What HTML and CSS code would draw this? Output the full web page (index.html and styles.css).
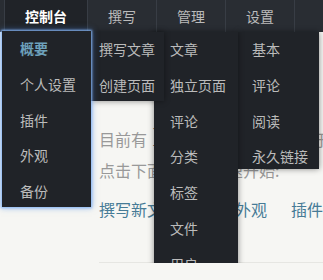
FILE: index.html
```html
<!DOCTYPE html>
<html lang="zh-CN">
<head>
<meta charset="utf-8">
<title>控制台</title>
<link rel="stylesheet" href="styles.css">
</head>
<body>
<header class="nav">
  <ul class="nav-list">
    <li class="nav-item">
      <a class="nav-link is-focus" href="#">控制台</a>
      <ul class="menu menu-dash">
        <li><a class="menu-link is-current" href="#">概要</a></li>
        <li><a class="menu-link" href="#">个人设置</a></li>
        <li><a class="menu-link" href="#">插件</a></li>
        <li><a class="menu-link" href="#">外观</a></li>
        <li><a class="menu-link" href="#">备份</a></li>
      </ul>
    </li>
    <li class="nav-item">
      <a class="nav-link" href="#">撰写</a>
      <ul class="menu menu-write">
        <li><a class="menu-link" href="#">撰写文章</a></li>
        <li><a class="menu-link" href="#">创建页面</a></li>
      </ul>
    </li>
    <li class="nav-item">
      <a class="nav-link" href="#">管理</a>
      <ul class="menu menu-manage">
        <li><a class="menu-link" href="#">文章</a></li>
        <li><a class="menu-link" href="#">独立页面</a></li>
        <li><a class="menu-link" href="#">评论</a></li>
        <li><a class="menu-link" href="#">分类</a></li>
        <li><a class="menu-link" href="#">标签</a></li>
        <li><a class="menu-link" href="#">文件</a></li>
        <li><a class="menu-link" href="#">用户</a></li>
      </ul>
    </li>
    <li class="nav-item">
      <a class="nav-link" href="#">设置</a>
      <ul class="menu menu-setting">
        <li><a class="menu-link" href="#">基本</a></li>
        <li><a class="menu-link" href="#">评论</a></li>
        <li><a class="menu-link" href="#">阅读</a></li>
        <li><a class="menu-link" href="#">永久链接</a></li>
      </ul>
    </li>
  </ul>
</header>
<main class="main">
  <p class="welcome">目前有 <em>1</em> 篇文章, 并有 <em>0</em> 条关于你的评论在 <em>1</em> 个分类中.<br>点击下面的链接快速开始:</p>
  <ul class="start-links">
    <li><a href="#">撰写新文章</a></li>
    <li><a href="#">更换外观</a></li>
    <li><a href="#">插件管理</a></li>
  </ul>
  <hr class="divider">
</main>
</body>
</html>
```
FILE: styles.css
```css
* { box-sizing: border-box; }
html, body { margin: 0; padding: 0; }
body {
  background: #f6f6f3;
  font-family: "Noto Sans CJK SC", "Noto Sans", sans-serif;
  font-size: 14px;
  overflow: hidden;
}
ul { list-style: none; margin: 0; padding: 0; }
a { text-decoration: none; }

.nav {
  position: relative;
  z-index: 10;
  height: 32px;
  background: #292d33;
  padding-left: 4px;
}
.nav-list {
  display: flex;
  height: 32px;
  border-left: 1px solid #383d45;
}
.nav-link {
  display: block;
  height: 32px;
  line-height: 32px;
  padding: 0 20px;
  border-right: 1px solid #383d45;
  color: #bbb;
}
.nav-link.is-focus {
  background: #202328;
  color: #fff;
  font-weight: bold;
}

.menu {
  position: absolute;
  top: 32px;
  overflow: hidden;
  background: #202328;
  box-shadow: 0 0 6px rgba(0, 0, 0, 0.45);
}
.menu-link {
  display: block;
  line-height: 35.8px;
  color: #bbb;
  white-space: nowrap;
}
.menu-link.is-current {
  color: #6da1bb;
  font-weight: bold;
}
.menu-dash {
  top: 31px;
  left: 2px;
  width: 89px;
  height: 176px;
  padding-left: 18px;
  z-index: 4;
  box-shadow: 0 0 2px 1px rgba(140, 185, 245, 0.9), 0 0 6px 1px rgba(80, 140, 230, 0.55);
}
.menu-write {
  left: 91px;
  width: 73px;
  height: 69px;
  padding-left: 8px;
  z-index: 3;
}
.menu-manage {
  left: 154px;
  width: 84px;
  height: 245px;
  padding-left: 16px;
  z-index: 2;
}
.menu-setting {
  left: 238px;
  width: 81px;
  height: 137px;
  padding-left: 14px;
  z-index: 1;
}

.main {
  padding: 92px 0 0 99px;
}
.welcome {
  margin: 0;
  font-size: 16px;
  line-height: 31px;
  color: #999;
  white-space: nowrap;
}
.welcome em {
  font-style: normal;
  font-size: 2em;
  line-height: 0;
  color: #444;
  font-family: "Liberation Serif", serif;
}
.start-links {
  display: flex;
  gap: 24px;
  margin-top: 11px;
  font-size: 16px;
  line-height: 24px;
  white-space: nowrap;
}
.start-links li { flex-shrink: 0; }
.start-links a { color: #467b96; }
.divider {
  margin: 41px 0 0;
  height: 0;
  border: 0;
  border-top: 1px solid #e6e6e2;
}
```
